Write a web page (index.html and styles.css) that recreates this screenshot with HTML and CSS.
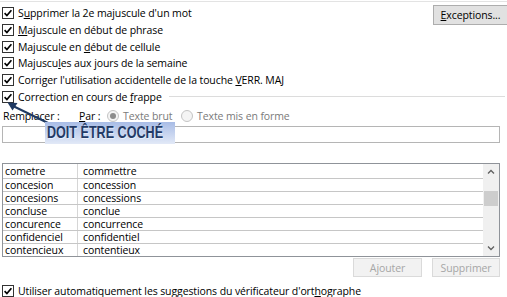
FILE: index.html
```html
<!DOCTYPE html>
<html lang="fr">
<head>
<meta charset="utf-8">
<link rel="stylesheet" href="styles.css">
</head>
<body>
<div class="dialog">
  <div class="top-rule"></div>
  <div class="opts">
    <div class="checks">
      <div class="check-row"><span class="cb"><svg viewBox="0 0 12 12" width="12" height="12"><rect x="0.5" y="0.5" width="11" height="11" fill="#fff" stroke="#333"/><path d="M2.6 6.2 L4.9 8.5 L9.4 3.2" fill="none" stroke="#000" stroke-width="1.7"/></svg></span><span>S<u>u</u>pprimer la 2e majuscule d'un mot</span></div>
      <div class="check-row"><span class="cb"><svg viewBox="0 0 12 12" width="12" height="12"><rect x="0.5" y="0.5" width="11" height="11" fill="#fff" stroke="#333"/><path d="M2.6 6.2 L4.9 8.5 L9.4 3.2" fill="none" stroke="#000" stroke-width="1.7"/></svg></span><span><u>M</u>ajuscule en début de phrase</span></div>
      <div class="check-row"><span class="cb"><svg viewBox="0 0 12 12" width="12" height="12"><rect x="0.5" y="0.5" width="11" height="11" fill="#fff" stroke="#333"/><path d="M2.6 6.2 L4.9 8.5 L9.4 3.2" fill="none" stroke="#000" stroke-width="1.7"/></svg></span><span>Majuscule en <u>d</u>ébut de cellule</span></div>
      <div class="check-row"><span class="cb"><svg viewBox="0 0 12 12" width="12" height="12"><rect x="0.5" y="0.5" width="11" height="11" fill="#fff" stroke="#333"/><path d="M2.6 6.2 L4.9 8.5 L9.4 3.2" fill="none" stroke="#000" stroke-width="1.7"/></svg></span><span>Majuscu<u>l</u>es aux jours de la semaine</span></div>
      <div class="check-row"><span class="cb"><svg viewBox="0 0 12 12" width="12" height="12"><rect x="0.5" y="0.5" width="11" height="11" fill="#fff" stroke="#333"/><path d="M2.6 6.2 L4.9 8.5 L9.4 3.2" fill="none" stroke="#000" stroke-width="1.7"/></svg></span><span>Corriger l'utilisation accidentelle de la touche <u>V</u>ERR. MAJ</span></div>
    </div>
    <button class="btn exc"><u>E</u>xceptions...</button>
  </div>
  <div class="check-row group"><span class="cb"><svg viewBox="0 0 12 12" width="12" height="12"><rect x="0.5" y="0.5" width="11" height="11" fill="#fff" stroke="#333"/><path d="M2.6 6.2 L4.9 8.5 L9.4 3.2" fill="none" stroke="#000" stroke-width="1.7"/></svg></span><span>Correction en cours de <u>f</u>rappe</span></div>
  <div class="replace-row">
    <span class="lbl-rep">Remplacer :</span>
    <span class="lbl-par"><u>P</u>ar :</span>
    <span class="radio on"></span><span class="dis rtxt1">Texte brut</span>
    <span class="radio"></span><span class="dis">Texte mis en forme</span>
  </div>
  <div class="field"></div>
  <div class="list">
    <div class="rows">
      <div class="row"><span class="c1">cometre</span><span class="c2">commettre</span></div>
      <div class="row"><span class="c1">concesion</span><span class="c2">concession</span></div>
      <div class="row"><span class="c1">concesions</span><span class="c2">concessions</span></div>
      <div class="row"><span class="c1">concluse</span><span class="c2">conclue</span></div>
      <div class="row"><span class="c1">concurence</span><span class="c2">concurrence</span></div>
      <div class="row"><span class="c1">confidenciel</span><span class="c2">confidentiel</span></div>
      <div class="row"><span class="c1">contencieux</span><span class="c2">contentieux</span></div>
    </div>
    <div class="sbar">
      <svg class="arr" viewBox="0 0 16 16" width="16" height="16"><path d="M5 9.5 L8 6.5 L11 9.5" fill="none" stroke="#606060" stroke-width="1.3"/></svg>
      <div class="track"><div class="thumb"></div></div>
      <svg class="arr" viewBox="0 0 16 16" width="16" height="16"><path d="M5 6.5 L8 9.5 L11 6.5" fill="none" stroke="#606060" stroke-width="1.3"/></svg>
    </div>
  </div>
  <div class="actions">
    <button class="btn off w1">Ajouter</button>
    <button class="btn off w2">Supprimer</button>
  </div>
  <div class="check-row last"><span class="cb"><svg viewBox="0 0 12 12" width="12" height="12"><rect x="0.5" y="0.5" width="11" height="11" fill="#fff" stroke="#333"/><path d="M2.6 6.2 L4.9 8.5 L9.4 3.2" fill="none" stroke="#000" stroke-width="1.7"/></svg></span><span class="tight">Utiliser automatiquement les suggestions du vérificateur d'ort<u>h</u>ographe</span></div>

  <svg class="pointer" viewBox="0 0 60 40" width="60" height="40"><line x1="13" y1="10" x2="48" y2="27" stroke="#1f3a63" stroke-width="2"/><polygon points="7.5,6.5 17.5,7 12.5,14.5" fill="#1f3a63"/></svg>
  <div class="callout"><span class="callout-txt">DOIT ÊTRE COCHÉ</span></div>
</div>
</body>
</html>
```
FILE: styles.css
```css
* { box-sizing: border-box; }
body {
  margin: 0;
  width: 507px;
  height: 297px;
  overflow: hidden;
  background: #fff;
  font-family: "Open Sans", "Noto Sans", sans-serif;
  font-size: 10.5px;
  letter-spacing: -0.1px;
  color: #000;
}
.dialog { position: relative; height: 297px; }
.top-rule { height: 1px; background: #e3e3e3; margin-top: 1px; }
.opts { display: flex; justify-content: space-between; padding-top: 2.6px; }
.checks { display: flex; flex-direction: column; }
.check-row {
  display: flex;
  align-items: center;
  gap: 4px;
  height: 16.8px;
  padding-left: 2px;
  white-space: nowrap;
}
.cb { display: flex; width: 12px; height: 12px; }
.group::after {
  content: "";
  flex: 1;
  height: 1px;
  background: #dcdcdc;
  margin: 0 2px 0 3px;
}
.btn {
  font-family: inherit;
  font-size: 10.5px;
  letter-spacing: -0.1px;
  padding: 0;
  height: 20px;
  border: 1px solid #adadad;
  background: #e1e1e1;
  color: #000;
}
.exc { width: 75px; margin-top: 0.4px; margin-right: -1px; }
.replace-row {
  display: flex;
  align-items: center;
  height: 21px;
  padding-left: 3px;
}
.lbl-rep { width: 76px; }
.lbl-par { width: 28px; }
.radio {
  width: 12px;
  height: 12px;
  border-radius: 50%;
  border: 1px solid #c4c4c4;
  background: #f4f4f4;
  margin-right: 4px;
  display: flex;
  align-items: center;
  justify-content: center;
}
.radio.on::after {
  content: "";
  width: 6px;
  height: 6px;
  border-radius: 50%;
  background: #8c8c8c;
}
.dis { color: #7a7a7a; }
.rtxt1 { width: 58px; }
.field {
  height: 17px;
  margin: 0 7px 0 2px;
  border: 1px solid #b5b5b5;
}
.list {
  display: flex;
  height: 94px;
  margin: 20px 7px 0 2px;
  border: 1px solid #8f9399;
}
.rows { flex: 1; display: flex; flex-direction: column; }
.row {
  display: flex;
  height: 13.33px;
  align-items: center;
  line-height: 12px;
}
.row + .row { border-top: 1px solid #c6c6c6; }
.c1 {
  width: 75px;
  height: 100%;
  padding-left: 2px;
  border-right: 1px solid #d6d6d6;
  display: flex;
  align-items: center;
}
.c2 { padding-left: 5px; display: flex; align-items: center; height: 100%; }
.row .c2 { flex: 1; margin-right: 1px; }
.sbar {
  width: 16px;
  background: #f0f0f0;
  display: flex;
  flex-direction: column;
}
.arr { display: block; }
.track { flex: 1; padding: 11px 1px 0; }
.thumb { height: 15px; background: #cdcdcd; }
.actions {
  display: flex;
  justify-content: flex-end;
  gap: 10px;
  margin: 1px 7px 0 0;
}
.off {
  height: 19px;
  background: #f2f2f2;
  border-color: #dadada;
  color: #a6a6a6;
}
.w1 { width: 69px; }
.w2 { width: 68px; }
.last { margin-top: 7.5px; height: 12px; }
.tight { line-height: 12px; }
.pointer { position: absolute; left: 0; top: 95px; }
.callout {
  position: absolute;
  left: 45px;
  top: 121px;
  width: 130px;
  height: 22px;
  padding-left: 2px;
  background: linear-gradient(to bottom, #a8bce6, #e2e9f7);
  white-space: nowrap;
  overflow: hidden;
}
.callout-txt {
  display: inline-block;
  transform: scaleX(0.74);
  transform-origin: left center;
  color: #233a66;
  font-family: "Liberation Sans", sans-serif;
  font-weight: bold;
  font-size: 17px;
  line-height: 22px;
  letter-spacing: 0;
  text-shadow: 1px 1px 1px rgba(255, 255, 255, 0.6);
}
```
